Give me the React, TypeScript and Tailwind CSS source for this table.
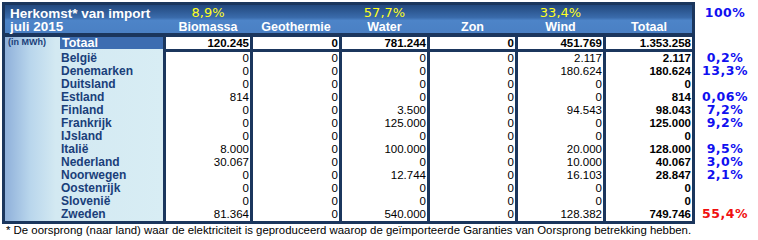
import React from 'react';

const rows: [string, string[], string?, boolean?][] = [
  ['België', ['0', '0', '0', '0', '2.117', '2.117'], '0,2%'],
  ['Denemarken', ['0', '0', '0', '0', '180.624', '180.624'], '13,3%'],
  ['Duitsland', ['0', '0', '0', '0', '0', '0']],
  ['Estland', ['814', '0', '0', '0', '0', '814'], '0,06%'],
  ['Finland', ['0', '0', '3.500', '0', '94.543', '98.043'], '7,2%'],
  ['Frankrijk', ['0', '0', '125.000', '0', '0', '125.000'], '9,2%'],
  ['IJsland', ['0', '0', '0', '0', '0', '0']],
  ['Italië', ['8.000', '0', '100.000', '0', '20.000', '128.000'], '9,5%'],
  ['Nederland', ['30.067', '0', '0', '0', '10.000', '40.067'], '3,0%'],
  ['Noorwegen', ['0', '0', '12.744', '0', '16.103', '28.847'], '2,1%'],
  ['Oostenrijk', ['0', '0', '0', '0', '0', '0']],
  ['Slovenië', ['0', '0', '0', '0', '0', '0']],
  ['Zweden', ['81.364', '0', '540.000', '0', '128.382', '749.746'], '55,4%', true],
];

const cols = [
  { title: 'Biomassa', pct: '8,9%', total: '120.245', w: 'w-[84px]' },
  { title: 'Geothermie', pct: '', total: '0', w: 'w-[86px]' },
  { title: 'Water', pct: '57,7%', total: '781.244', w: 'w-[85px]' },
  { title: 'Zon', pct: '', total: '0', w: 'w-[85px]' },
  { title: 'Wind', pct: '33,4%', total: '451.769', w: 'w-[85px]' },
  { title: 'Totaal', pct: '', total: '1.353.258', w: 'w-[86px]' },
];

export default function App() {
  return (
    <div className="w-[758px] h-[240px] bg-white font-['Liberation_Sans',Arial,sans-serif] overflow-hidden">
      <div className="flex pt-[2px] pl-[2px]">
        {/* table */}
        <div className="bg-[#1b365d] p-[3px] flex flex-col">
          {/* header */}
          <div className="h-[28px] bg-[linear-gradient(to_bottom,#22487e_0%,#3a6bab_45%,#4d84c8_55%,#4a80c4_100%)] flex">
            <div className="w-[158px] pl-[5px] pt-[3px] text-white font-bold text-[13.5px] leading-[12.5px] whitespace-nowrap">
              <div>Herkomst* van import</div>
              <div>juli 2015</div>
            </div>
            {cols.map((c, i) => (
              <div key={i} className={`${c.w} ml-[3px] flex flex-col items-center`}>
                <div className="h-[16px] pt-[1px] text-[#ffff22] text-[13px] leading-[13px] font-['DejaVu_Sans',Verdana,sans-serif]">
                  {c.pct}
                </div>
                <div className="text-white font-bold text-[12.5px] leading-[12px] whitespace-nowrap">{c.title}</div>
              </div>
            ))}
          </div>
          {/* body */}
          <div className="flex gap-[3px] mt-[4px]">
            <div className="w-[158px] bg-[linear-gradient(to_right,#8fb0da_0%,#b9d6ec_16%,#d3e9f2_32%,#d8edf4_100%)] flex flex-col">
              <div className="h-[12px] flex">
                <div className="w-[55px] pl-[3px] text-[9px] font-bold text-[#1a3f7a] leading-[11px]">(in MWh)</div>
                <div className="flex-1 bg-[#3d6db1] text-white font-bold text-[12.5px] leading-[12px] pl-[2px]">Totaal</div>
              </div>
              <div className="h-[3px]" />
              {rows.map(([name]) => (
                <div key={name} className="h-[13px] pl-[56px] text-[12px] leading-[13px] font-bold text-[#1a3f7a]">
                  {name}
                </div>
              ))}
            </div>
            {cols.map((c, ci) => (
              <div key={ci} className={`${c.w} flex flex-col`}>
                <div className="h-[12px] bg-white text-right pr-[1px] text-[11.5px] leading-[12px] font-bold text-black">
                  {c.total}
                </div>
                <div className="h-[3px]" />
                <div className="bg-white">
                  {rows.map(([name, vals]) => (
                    <div
                      key={name}
                      className={`h-[13px] text-right pr-[1px] text-[11.5px] leading-[13px] text-black ${ci === 5 ? 'font-bold' : ''}`}
                    >
                      {vals[ci]}
                    </div>
                  ))}
                </div>
              </div>
            ))}
          </div>
        </div>
        {/* right percentages */}
        <div className="ml-[4px] w-[52px] flex flex-col items-center font-['DejaVu_Sans',Verdana,sans-serif] font-bold text-[12.5px] tracking-[0.5px]">
          <div className="h-[50px] pt-[4px] leading-[13px] text-[#1010f0]">100%</div>
          {rows.map(([name, , pct, red]) => (
            <div key={name} className={`h-[13px] leading-[12px] ${red ? 'text-[#f01010]' : 'text-[#1010f0]'}`}>
              {pct ?? ''}
            </div>
          ))}
        </div>
      </div>
      <div className="pl-[6px] text-[11.4px] leading-[12px] text-black whitespace-nowrap">
        * De oorsprong (naar land) waar de elektriciteit is geproduceerd waarop de geïmporteerde Garanties van Oorsprong betrekking hebben.
      </div>
    </div>
  );
}
